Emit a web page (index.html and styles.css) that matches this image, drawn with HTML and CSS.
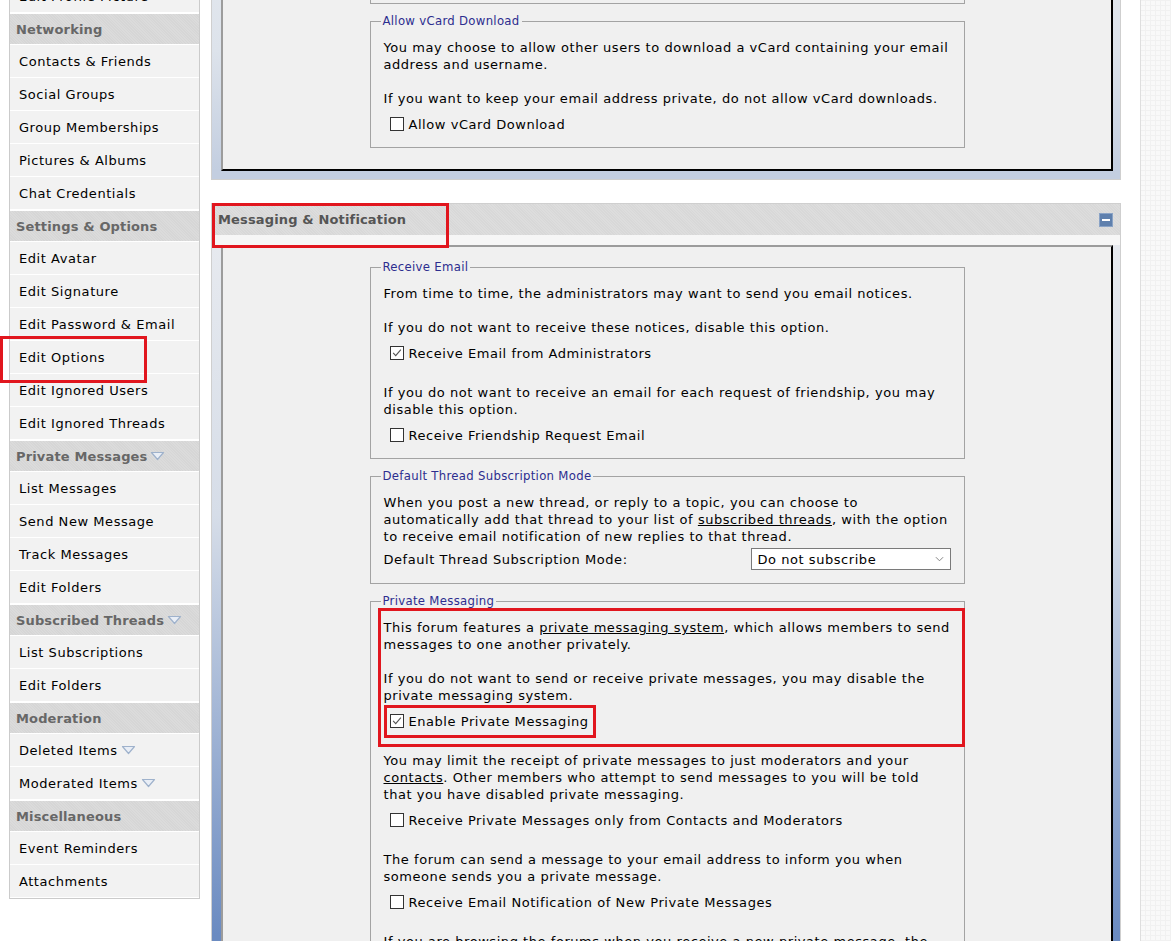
FILE: index.html
```html
<!DOCTYPE html>
<html lang="en">
<head>
<meta charset="utf-8">
<title>User Control Panel - Edit Options</title>
<link rel="stylesheet" href="styles.css">
</head>
<body>
<div class="page">
  <nav class="sidebar">
    <a class="item" href="#">Edit Profile Picture</a>
    <div class="head">Networking</div>
    <a class="item" href="#">Contacts &amp; Friends</a>
    <a class="item" href="#">Social Groups</a>
    <a class="item" href="#">Group Memberships</a>
    <a class="item" href="#">Pictures &amp; Albums</a>
    <a class="item" href="#">Chat Credentials</a>
    <div class="head">Settings &amp; Options</div>
    <a class="item" href="#">Edit Avatar</a>
    <a class="item" href="#">Edit Signature</a>
    <a class="item" href="#">Edit Password &amp; Email</a>
    <a class="item" href="#">Edit Options</a>
    <a class="item" href="#">Edit Ignored Users</a>
    <a class="item" href="#">Edit Ignored Threads</a>
    <div class="head">Private Messages<svg class="tri" viewBox="0 0 15 10"><path d="M1.5 1.5h12L7.5 8.5z"/></svg></div>
    <a class="item" href="#">List Messages</a>
    <a class="item" href="#">Send New Message</a>
    <a class="item" href="#">Track Messages</a>
    <a class="item" href="#">Edit Folders</a>
    <div class="head">Subscribed Threads<svg class="tri" viewBox="0 0 15 10"><path d="M1.5 1.5h12L7.5 8.5z"/></svg></div>
    <a class="item" href="#">List Subscriptions</a>
    <a class="item" href="#">Edit Folders</a>
    <div class="head">Moderation</div>
    <a class="item" href="#">Deleted Items<svg class="tri" viewBox="0 0 15 10"><path d="M1.5 1.5h12L7.5 8.5z"/></svg></a>
    <a class="item" href="#">Moderated Items<svg class="tri" viewBox="0 0 15 10"><path d="M1.5 1.5h12L7.5 8.5z"/></svg></a>
    <div class="head">Miscellaneous</div>
    <a class="item" href="#">Event Reminders</a>
    <a class="item" href="#">Attachments</a>
  </nav>

  <main class="main">
    <section class="panel panel-cut">
      <div class="panel-body">
        <div class="panel-inner">
          <fieldset class="stub" aria-hidden="true"></fieldset>
          <fieldset>
            <legend>Allow vCard Download</legend>
            <div class="opt">
              <p>You may choose to allow other users to download a vCard containing your email<br>address and username.</p>
              <p>If you want to keep your email address private, do not allow vCard downloads.</p>
              <label class="check"><span class="cb"></span>Allow vCard Download</label>
            </div>
          </fieldset>
        </div>
      </div>
    </section>

    <section class="panel">
      <div class="panel-head"><span>Messaging &amp; Notification</span><span class="collapse"><span></span></span></div>
      <div class="panel-body">
        <div class="panel-inner">
          <fieldset>
            <legend>Receive Email</legend>
            <div class="opt">
              <p>From time to time, the administrators may want to send you email notices.</p>
              <p>If you do not want to receive these notices, disable this option.</p>
              <label class="check"><span class="cb on"><svg viewBox="0 0 14 14"><path d="M2.5 6.8l3 3.2 6-7"/></svg></span>Receive Email from Administrators</label>
            </div>
            <div class="opt">
              <p>If you do not want to receive an email for each request of friendship, you may<br>disable this option.</p>
              <label class="check"><span class="cb"></span>Receive Friendship Request Email</label>
            </div>
          </fieldset>
          <fieldset>
            <legend>Default Thread Subscription Mode</legend>
            <div class="opt">
              <p>When you post a new thread, or reply to a topic, you can choose to<br>automatically add that thread to your list of <a href="#">subscribed threads</a>, with the option<br>to receive email notification of new replies to that thread.</p>
              <div class="select-row">
                <span>Default Thread Subscription Mode:</span>
                <span class="select"><span>Do not subscribe</span><svg viewBox="0 0 10 6"><path d="M1 1l4 4 4-4"/></svg></span>
              </div>
            </div>
          </fieldset>
          <fieldset>
            <legend>Private Messaging</legend>
            <div class="opt">
              <p>This forum features a <a href="#">private messaging system</a>, which allows members to send<br>messages to one another privately.</p>
              <p>If you do not want to send or receive private messages, you may disable the<br>private messaging system.</p>
              <label class="check"><span class="cb on"><svg viewBox="0 0 14 14"><path d="M2.5 6.8l3 3.2 6-7"/></svg></span>Enable Private Messaging</label>
            </div>
            <div class="opt">
              <p>You may limit the receipt of private messages to just moderators and your<br><a href="#">contacts</a>. Other members who attempt to send messages to you will be told<br>that you have disabled private messaging.</p>
              <label class="check"><span class="cb"></span>Receive Private Messages only from Contacts and Moderators</label>
            </div>
            <div class="opt">
              <p>The forum can send a message to your email address to inform you when<br>someone sends you a private message.</p>
              <label class="check"><span class="cb"></span>Receive Email Notification of New Private Messages</label>
            </div>
            <div class="opt">
              <p>If you are browsing the forums when you receive a new private message, the</p>
            </div>
          </fieldset>
        </div>
      </div>
    </section>
  </main>
</div>

<div class="mark mark-title"></div>
<div class="mark mark-nav"></div>
<div class="mark mark-pm"></div>
<div class="mark mark-enable"></div>
</body>
</html>
```

FILE: styles.css
```css
* { box-sizing: border-box; }

html, body { margin: 0; }

body {
  font-family: "DejaVu Sans", Verdana, sans-serif;
  font-size: 13px;
  line-height: 17px;
  letter-spacing: 0.55px;
  color: #000;
  background-color: #f9f9f9;
  background-image:
    linear-gradient(#f1f1f1 1px, transparent 1px),
    linear-gradient(90deg, #f1f1f1 1px, transparent 1px);
  background-size: 5px 5px;
  overflow: hidden;
}

.page {
  width: 1141px;
  min-height: 941px;
  background: #fff;
  border-right: 1px solid #dedede;
  padding-left: 9px;
  display: flex;
  align-items: flex-start;
  gap: 11px;
}

/* ---------- sidebar ---------- */
.sidebar {
  width: 191px;
  flex: none;
  margin-top: -21px;
  border: 1px solid #cbcbcb;
  background: #f2f2f2;
  display: flex;
  flex-direction: column;
}

.item {
  height: 33px;
  border-bottom: 1px solid #fff;
  padding-left: 9px;
  display: flex;
  align-items: center;
  color: #000;
  text-decoration: none;
  background: #f2f2f2;
}

.head {
  height: 32px;
  border-top: 1px solid #fff;
  border-bottom: 1px solid #fff;
  padding-left: 6px;
  display: flex;
  align-items: center;
  font-weight: bold;
  letter-spacing: 0.15px;
  color: #676767;
  background: repeating-linear-gradient(45deg, #d6d6d6 0, #d6d6d6 1px, #dbdbdb 1px, #dbdbdb 2px);
}

.tri {
  width: 15px;
  height: 10px;
  margin-left: 3px;
  flex: none;
}
.tri path {
  fill: #e9eef6;
  stroke: #9fb2cc;
  stroke-width: 1.2;
  stroke-linejoin: round;
}

/* ---------- main ---------- */
.main {
  width: 910px;
  flex: none;
  margin-top: -71px;
}

.panel {
  border: 1px solid #cfcfcf;
  margin-bottom: 23px;
}

.panel-head {
  height: 31px;
  padding: 0 7px 0 6px;
  display: flex;
  align-items: center;
  justify-content: space-between;
  font-weight: bold;
  letter-spacing: 0.15px;
  color: #555;
  background: repeating-linear-gradient(45deg, #d8d8d8 0, #d8d8d8 1px, #dddddd 1px, #dddddd 2px);
}

.collapse {
  width: 14px;
  height: 14px;
  background: #5f80ad;
  border: 1px solid #8aa3c6;
  display: flex;
  align-items: center;
  justify-content: center;
}
.collapse span {
  width: 8px;
  height: 2px;
  background: #fff;
}

.panel-body {
  padding: 10px 7px 8px 9px;
  background:
    linear-gradient(#f6f6f6, #f6f6f6) top left / 100% 10px no-repeat,
    linear-gradient(#e7eaef 0, #d6dde8 280px, #6b8bc1 700px);
}

.panel-cut .panel-body {
  padding-top: 0;
  background: linear-gradient(#e4e8ee 0, #dde3eb 120px, #c3cee0 240px);
}

.panel-inner {
  background: #f0f0f0;
  border: 2px solid;
  border-color: #9c9c9c #000 #000 #9c9c9c;
  padding: 12px 0;
}

fieldset {
  width: 595px;
  margin: 0 auto 9px;
  border: 1px solid #a3a3a3;
  padding: 10px 13px 13px;
  min-inline-size: 0;
}

fieldset.stub {
  height: 60px;
}

legend {
  margin-left: -3px;
  padding: 0 2px;
  font-family: "DejaVu Sans Condensed", "Liberation Sans", sans-serif;
  font-size: 13px;
  line-height: 16px;
  letter-spacing: 0.3px;
  color: #2d2d8f;
}

.opt + .opt { margin-top: 21px; }

.opt p {
  margin: 0;
  white-space: nowrap;
}
.opt p + p { margin-top: 17px; }

.opt a {
  color: #000;
  text-decoration: underline;
}

.check {
  height: 20px;
  margin-top: 7px;
  padding-left: 6px;
  display: flex;
  align-items: center;
  gap: 5px;
}

.cb {
  width: 14px;
  height: 14px;
  flex: none;
  border: 1px solid #333;
  background: #fff;
  display: flex;
}
.cb svg {
  width: 12px;
  height: 12px;
}
.cb svg path {
  fill: none;
  stroke: #555;
  stroke-width: 1.3;
}

.select-row {
  margin-top: 3px;
  height: 22px;
  display: flex;
  align-items: center;
  justify-content: space-between;
}

.select {
  width: 200px;
  height: 22px;
  border: 1px solid #7a7a7a;
  background: #fff;
  padding: 0 6px;
  display: flex;
  align-items: center;
  justify-content: space-between;
}
.select svg {
  width: 9px;
  height: 6px;
}
.select svg path {
  fill: none;
  stroke: #777;
  stroke-width: 1;
}

/* ---------- annotation marks ---------- */
.mark {
  position: absolute;
  border: 3px solid #e1161e;
  pointer-events: none;
}
.mark-title { left: 212px; top: 203px; width: 237px; height: 45px; }
.mark-nav { left: 0; top: 336px; width: 147px; height: 47px; }
.mark-pm { left: 378px; top: 608px; width: 587px; height: 139px; }
.mark-enable { left: 384px; top: 705px; width: 212px; height: 33px; }
```
